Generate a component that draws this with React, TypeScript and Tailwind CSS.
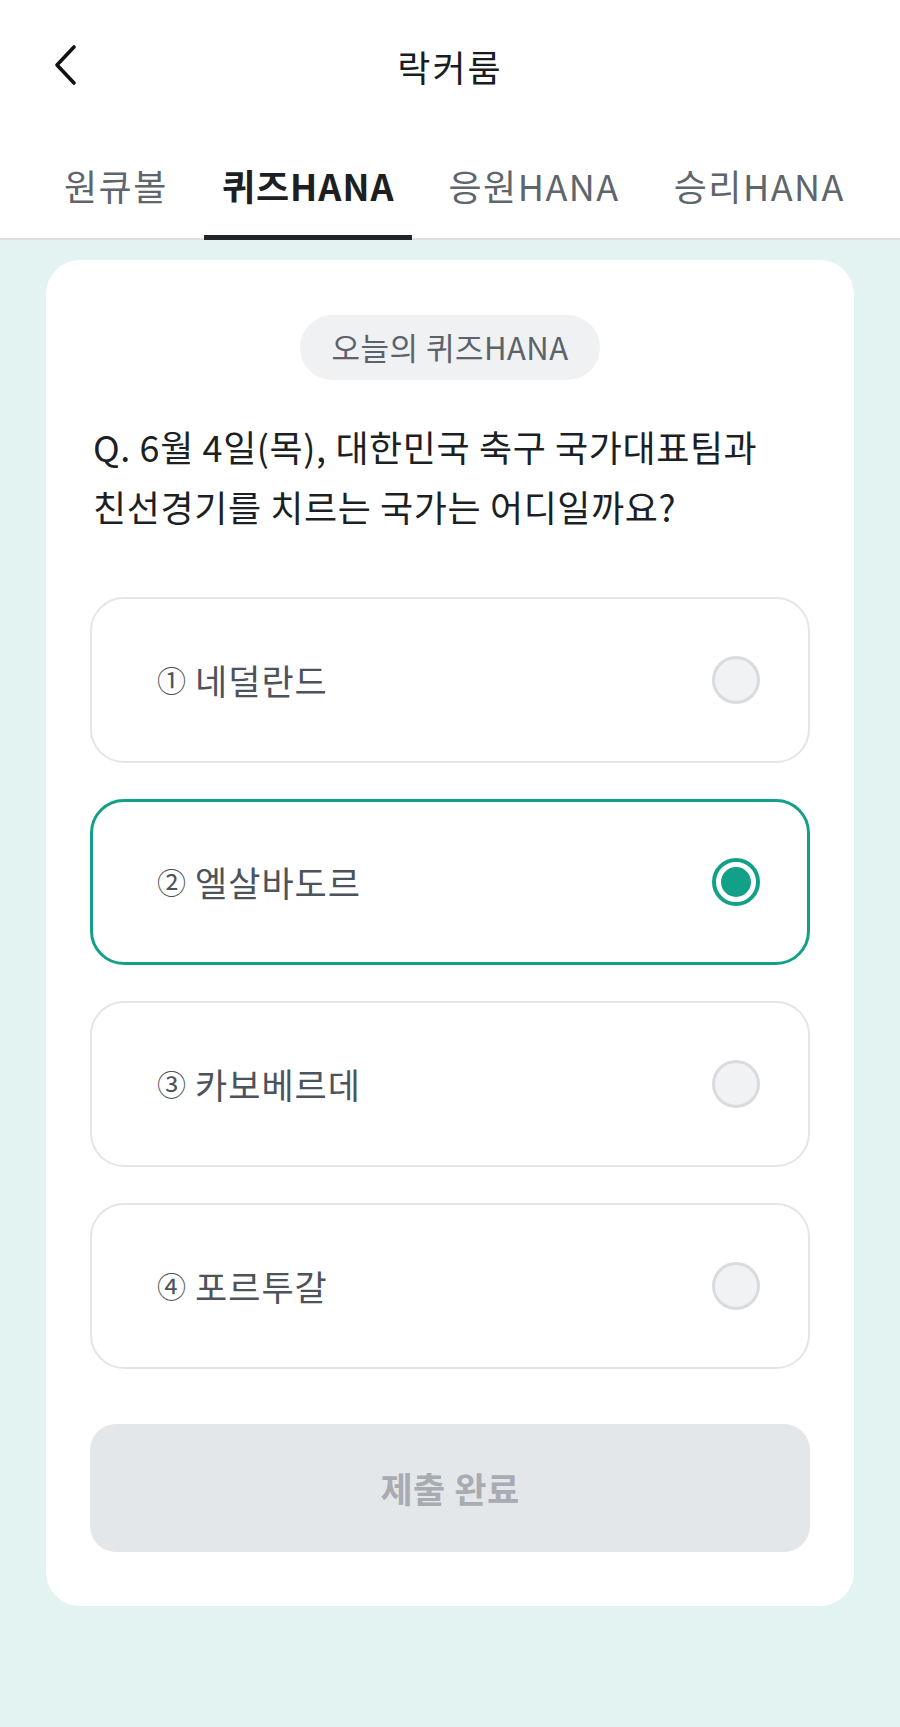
import { useState } from 'react';

const font = { fontFamily: '"Noto Sans CJK KR", "Noto Sans", sans-serif' };

const tabs = ['원큐볼', '퀴즈HANA', '응원HANA', '승리HANA'];

const options = [
    { no: '①', label: '네덜란드' },
    { no: '②', label: '엘살바도르' },
    { no: '③', label: '카보베르데' },
    { no: '④', label: '포르투갈' },
];

function Radio({ checked }: { checked: boolean }) {
    if (checked) {
        return (
            <div className="flex h-[48px] w-[48px] items-center justify-center rounded-full border-[4px] border-[#13a089] bg-white">
                <div className="h-[30px] w-[30px] rounded-full bg-[#13a089]" />
            </div>
        );
    }
    return <div className="h-[48px] w-[48px] rounded-full border-[3px] border-[#d9dbde] bg-[#f1f2f4]" />;
}

export default function App() {
    const [active, setActive] = useState(1);
    const [selected, setSelected] = useState(1);

    return (
        <div className="flex min-h-[1727px] w-[900px] flex-col bg-[#e3f3f2]" style={font}>
            {/* header */}
            <div className="bg-white">
                <div className="relative flex h-[132px] items-center justify-center">
                    <button className="absolute left-[50px] top-[44px] flex h-[42px] w-[30px] items-center justify-center">
                        <svg width="26" height="42" viewBox="0 0 26 42" fill="none">
                            <path d="M22 3L5 21l17 18" stroke="#111" strokeWidth="3.6" strokeLinecap="round" strokeLinejoin="round" />
                        </svg>
                    </button>
                    <h1 className="text-[36px] font-normal tracking-[2px] text-[#1b1c1e]">락커룸</h1>
                </div>
                <div className="flex h-[108px] gap-[18px] border-b-2 border-[#dcdee1] pl-[46px]">
                    {tabs.map((t, i) => (
                        <button
                            key={t}
                            onClick={() => setActive(i)}
                            className={
                                i === active
                                    ? 'relative -mb-[2px] flex items-center border-b-[5px] border-[#22262b] px-[18px] pt-[3px] text-[36px] font-bold tracking-[1px] text-[#1d1f22]'
                                    : 'relative -mb-[2px] flex items-center border-b-[5px] border-transparent px-[18px] pt-[3px] text-[36px] font-normal tracking-[1.5px] text-[#5f656d]'
                            }
                        >
                            {t}
                        </button>
                    ))}
                </div>
            </div>

            {/* quiz card */}
            <div className="mx-[46px] mt-[20px] flex flex-col rounded-[34px] bg-white px-[44px] pb-[54px] pt-[55px]">
                <div className="flex h-[65px] w-[300px] items-center justify-center self-center rounded-full bg-[#f0f1f3] text-[31px] font-normal tracking-[0.5px] text-[#5c626a]">
                    오늘의 퀴즈HANA
                </div>
                <p className="mt-[36px] pl-[3px] text-[36px] font-normal leading-[60px] tracking-[0.6px] text-[#1c1f23]">
                    Q. 6월 4일(목), 대한민국 축구 국가대표팀과
                    <br />
                    친선경기를 치르는 국가는 어디일까요?
                </p>

                <div className="mt-[61px] flex flex-col gap-[36px]">
                    {options.map((o, i) => (
                        <button
                            key={o.label}
                            onClick={() => setSelected(i)}
                            className={
                                i === selected
                                    ? 'flex h-[166px] items-center justify-between rounded-[34px] border-[3px] border-[#13a089] bg-white pl-[64px] pr-[47px]'
                                    : 'flex h-[166px] items-center justify-between rounded-[34px] border-2 border-[#e4e5e7] bg-white pl-[65px] pr-[48px]'
                            }
                        >
                            <span className="flex items-center gap-[8px] text-[35px] tracking-[1px] text-[#4d535b]">
                                <span className="text-[29px]">{o.no}</span>
                                {o.label}
                            </span>
                            <Radio checked={i === selected} />
                        </button>
                    ))}
                </div>

                <button className="mt-[55px] flex h-[128px] items-center justify-center rounded-[26px] bg-[#e4e7ea] text-[35px] font-bold tracking-[0.5px] text-[#a8acb2]">
                    제출 완료
                </button>
            </div>
        </div>
    );
}
